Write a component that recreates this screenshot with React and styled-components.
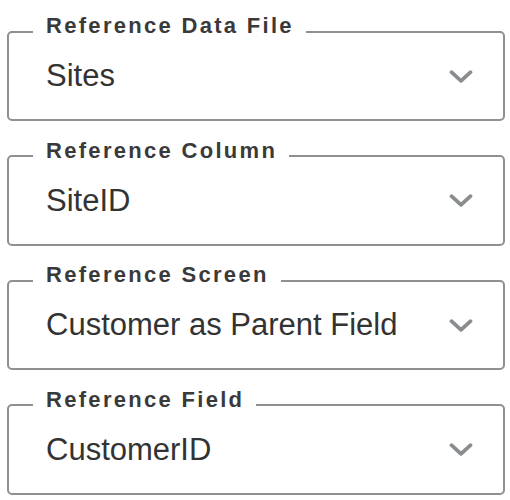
import React from 'react';
import styled, { createGlobalStyle } from 'styled-components';

const GlobalStyle = createGlobalStyle`
  html, body {
    margin: 0;
    padding: 0;
    background: #ffffff;
  }
  body {
    font-family: "Liberation Sans", Arial, sans-serif;
  }
`

const fields = [
  { label: 'Reference Data File', value: 'Sites' },
  { label: 'Reference Column', value: 'SiteID' },
  { label: 'Reference Screen', value: 'Customer as Parent Field' },
  { label: 'Reference Field', value: 'CustomerID' }
]

const Chevron = () => (
  <ChevronIcon viewBox="0 0 24 13" aria-hidden="true">
    <polyline points="2.5,2.2 12,10.8 21.5,2.2" />
  </ChevronIcon>
)

const App = () => {
  return (
    <Page>
      <GlobalStyle />
      {fields.map(f => (
        <Field key={f.label}>
          <Legend>{f.label}</Legend>
          <Row>
            <Value>{f.value}</Value>
            <Chevron />
          </Row>
        </Field>
      ))}
    </Page>
  )
}

const Page = styled.div`
display: flex;
flex-direction: column;
gap: 17.5px;
width: 498px;
padding: 14px 0 0 7px;
`
const Field = styled.fieldset`
margin: 0;
min-width: 0;
border: 2px solid #8e9194;
border-radius: 5px;
padding: 10px 30px 26px 24px;
`
const Legend = styled.legend`
padding: 0 12px 11px 13px;
font-size: 22px;
line-height: 24px;
font-weight: 700;
letter-spacing: 2.3px;
color: #3a3a3a;
`
const Row = styled.div`
display: flex;
align-items: center;
justify-content: space-between;
padding-left: 13px;
`
const Value = styled.span`
font-size: 31px;
line-height: 34px;
color: #333333;
`
const ChevronIcon = styled.svg`
width: 24px;
height: 13px;
fill: none;
stroke: #8a8d90;
stroke-width: 3.8;
stroke-linecap: round;
stroke-linejoin: round;
`

export default App
